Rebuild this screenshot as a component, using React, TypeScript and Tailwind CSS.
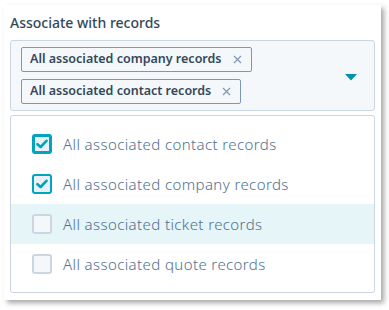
import { useState } from "react";

const options = [
  { id: "contact", label: "All associated contact records", checked: true, focused: true },
  { id: "company", label: "All associated company records", checked: true },
  { id: "ticket", label: "All associated ticket records", checked: false, hovered: true },
  { id: "quote", label: "All associated quote records", checked: false },
];

function Check({ checked, focused }: { checked: boolean; focused?: boolean }) {
  return (
    <span
      className={
        "flex h-[20px] w-[20px] shrink-0 items-center justify-center rounded-[3px] " +
        (checked
          ? focused
            ? "border-[3px] border-[#00a4bd] bg-[#eaf0f6]"
            : "border-2 border-[#00a4bd] bg-[#eaf0f6]"
          : "border-2 border-[#cbd6e2] bg-[#f5f8fa]")
      }
    >
      {checked && (
        <svg width="12" height="10" viewBox="0 0 12 10">
          <path d="M1.5 5.2 L4.6 8 L10.5 1.8" fill="none" stroke="#00a4bd" strokeWidth="2.6" strokeLinecap="round" strokeLinejoin="round" />
        </svg>
      )}
    </span>
  );
}

function Tag({ label }: { label: string }) {
  return (
    <div className="flex h-[25px] items-center rounded-[2px] border border-[#7c98b6] bg-[#f5f8fa] pl-[8px] pr-[9px]">
      <span className="text-[12.5px] font-semibold text-[#33475b]">{label}</span>
      <svg className="ml-[11px]" width="9" height="9" viewBox="0 0 9 9">
        <path d="M1 1 L8 8 M8 1 L1 8" stroke="#7c98b6" strokeWidth="1.2" />
      </svg>
    </div>
  );
}

export default function App() {
  const [items, setItems] = useState(options);

  return (
    <div className="min-h-screen bg-white pl-[4px] pt-[5px]" style={{ fontFamily: '"Noto Sans", Lato, sans-serif' }}>
      <div className="w-[377px] bg-white px-[6px] pb-[7px] pt-[9px] shadow-[3px_3px_5px_rgba(0,0,0,0.35)]">
        <h2 className="text-[14px] font-medium leading-[18px] text-[#33475b]">Associate with records</h2>
        <div className="mt-[8px] flex items-center rounded-[3px] border border-[#cbd6e2] bg-[#f5f8fa] py-[6px] pl-[10px] pr-[17px]">
          <div className="flex flex-1 flex-col items-start gap-[7px]">
            <Tag label="All associated company records" />
            <Tag label="All associated contact records" />
          </div>
          <svg width="12" height="7" viewBox="0 0 12 7" className="mt-[4px]">
            <path d="M0 0 L12 0 L6 6.5 Z" fill="#0091ae" />
          </svg>
        </div>
        <ul className="mt-[4px] rounded-[3px] border border-[#cbd6e2] bg-white pb-[8px] pt-[8px]">
          {items.map((o) => (
            <li
              key={o.id}
              onClick={() => setItems(items.map((i) => (i.id === o.id ? { ...i, checked: !i.checked } : i)))}
              className={"flex h-[40px] cursor-pointer items-center gap-[11px] pl-[21px] " + (o.hovered ? "bg-[#e5f5f8]" : "")}
            >
              <Check checked={o.checked} focused={o.focused} />
              <span className="text-[15px] font-light tracking-[0.4px] text-[#516f90]">{o.label}</span>
            </li>
          ))}
        </ul>
      </div>
    </div>
  );
}
